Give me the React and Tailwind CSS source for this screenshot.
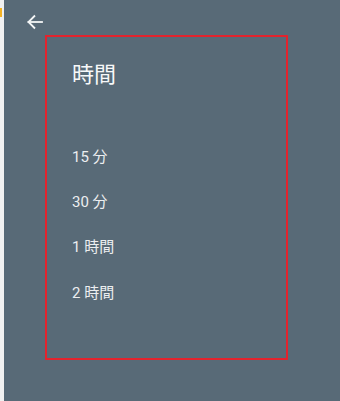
import React from "react";

const options = ["15 分", "30 分", "1 時間", "2 時間"];

function App() {
  return (
    <div
      className="flex w-[340px] h-[401px] overflow-hidden bg-[#586a77]"
      style={{ fontFamily: 'Roboto, "Noto Sans CJK JP", sans-serif' }}
    >
      <div className="w-[4px] shrink-0 bg-[#f1f1f1] pt-[8px]">
        <div className="w-[2px] h-[9px] bg-[#f5b323]" />
      </div>
      <div className="flex-1 flex flex-col">
        <button className="ml-[19px] mt-[10px] w-[24px] h-[24px] text-[#f4f6f7]">
          <svg viewBox="0 0 24 24" className="w-[24px] h-[24px]" fill="none" stroke="currentColor" strokeWidth="1.8" strokeLinecap="square">
            <path d="M19 12H5.5" />
            <path d="M12 5.5L5.5 12L12 18.5" strokeLinecap="butt" />
          </svg>
        </button>
        <div className="ml-[41px] mt-[1px] w-[243px] h-[325px] border-2 border-[#e3232d] pl-[25px] pt-[23px]">
          <h2 className="text-[22px] leading-[29px] text-[#f7f8f9]">時間</h2>
          <ul className="mt-[45px] text-[15px] leading-[20px] text-[#eceef0]">
            {options.map((o) => (
              <li key={o} className="h-[45.3px] flex items-center">
                {o}
              </li>
            ))}
          </ul>
        </div>
      </div>
    </div>
  );
}

export default App;
